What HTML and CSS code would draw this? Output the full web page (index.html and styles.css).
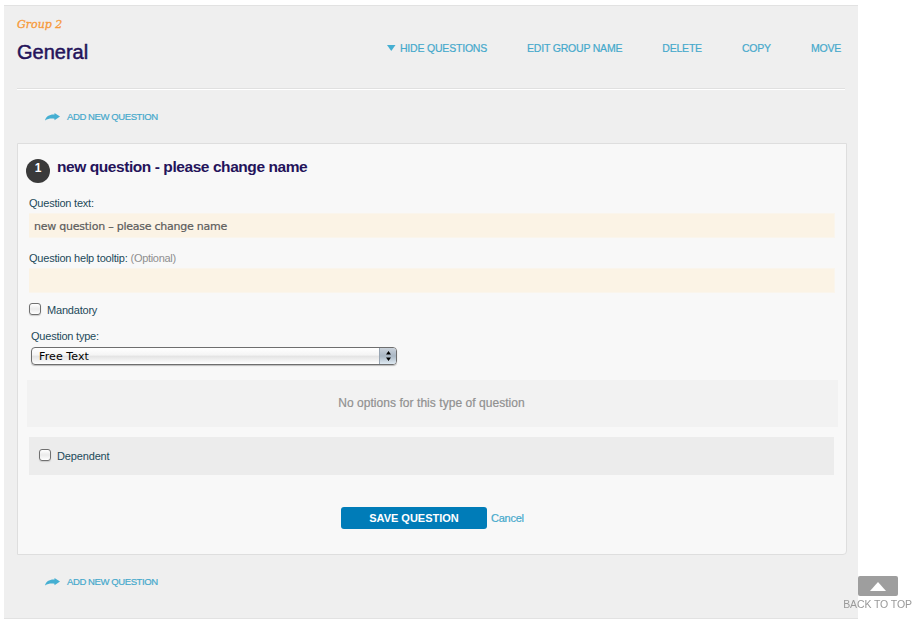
FILE: index.html
```html
<!DOCTYPE html>
<html lang="en">
<head>
<meta charset="utf-8">
<title>General</title>
<link rel="stylesheet" href="styles.css">
</head>
<body>
<main class="group">
  <header class="group-header">
    <div class="group-heading">
      <div class="group-index"><span>Group 2</span></div>
      <h1><span>General</span></h1>
    </div>
    <nav class="group-nav">
      <a class="nav-hide"><svg width="9" height="6" viewBox="0 0 9 6"><path d="M0 0h8.500L4.250 6z" fill="#45afd2"/></svg><span>HIDE QUESTIONS</span></a>
      <a class="nav-edit"><span>EDIT GROUP NAME</span></a>
      <a class="nav-delete"><span>DELETE</span></a>
      <a class="nav-copy"><span>COPY</span></a>
      <a class="nav-move"><span>MOVE</span></a>
    </nav>
  </header>
  <a class="add-question add-top"><svg width="16" height="8" viewBox="0 0 16 8"><path d="M0 7.500C.8 3.500 4.500 1.200 9.500 1.500V0l5.500 3.500L9.500 7.300V5.700C6 5.200 3 5.500 0 7.500z" fill="#45afd2"/></svg><span>ADD NEW QUESTION</span></a>
  <section class="card">
    <div class="title-row">
      <div class="badge">1</div>
      <h2><span>new question - please change name</span></h2>
    </div>
    <label class="label"><span class="t-question">Question text:</span></label>
    <div class="field"><span>new question – please change name</span></div>
    <label class="label label-help"><span class="t-help">Question help tooltip:</span><span class="optional">(Optional)</span></label>
    <div class="field"></div>
    <div class="check-row"><i class="checkbox"></i><span class="t-mandatory">Mandatory</span></div>
    <label class="label label-type"><span class="t-type">Question type:</span></label>
    <div class="select">
      <span>Free Text</span>
      <div class="stepper"><svg width="7" height="12" viewBox="0 0 7 12"><path d="M1 4.500h5L3.500 1zM1 7.500h5L3.500 11z" fill="#000"/></svg></div>
    </div>
    <div class="no-options"><span>No options for this type of question</span></div>
    <div class="dependent"><i class="checkbox"></i><span class="t-dependent">Dependent</span></div>
    <div class="actions"><div class="save"><span>SAVE QUESTION</span></div><a class="cancel">Cancel</a></div>
  </section>
  <a class="add-question add-bottom"><svg width="16" height="8" viewBox="0 0 16 8"><path d="M0 7.500C.8 3.500 4.500 1.200 9.500 1.500V0l5.500 3.500L9.500 7.300V5.700C6 5.200 3 5.500 0 7.500z" fill="#45afd2"/></svg><span>ADD NEW QUESTION</span></a>
</main>
<a class="back-top"><div class="back-button"><svg width="16" height="9" viewBox="0 0 16 9"><path d="M0 9h16L8 0z" fill="#fff"/></svg></div><span>BACK TO TOP</span></a>
</body>
</html>
```
FILE: styles.css
```css
* { box-sizing: border-box; }
body {
  margin: 0;
  height: 627px;
  overflow: hidden;
  background: #fff;
  font-family: "Liberation Sans", Arial, sans-serif;
  font-size: 11px;
  line-height: 14px;
  color: #1d4a5a;
  white-space: nowrap;
}
h1, h2 { margin: 0; color: #24135a; }
svg { display: block; flex: none; }
a { color: #45a9cc; }
.group {
  margin: 5px 0 0 4px;
  width: 854px;
  height: 614px;
  padding-left: 13px;
  background: #efefef;
  border-top: 1px solid #e2e2e2;
  border-bottom: 1px solid #e2e2e2;
  display: flow-root;
}
.group-header {
  display: flex;
  justify-content: space-between;
  width: 828px;
  height: 83px;
  border-bottom: 1px solid #e0e0e0;
  box-shadow: 0 1px 0 #fff;
}
.group-index {
  margin-top: 11px;
  height: 16px;
  font: italic 11px/16px "DejaVu Serif", Georgia, serif;
  color: #f79a3a;
  -webkit-text-stroke: 0.3px #f79a3a;
}
h1 {
  margin-top: 7px;
  font-size: 20px;
  line-height: 24px;
  font-weight: normal;
  -webkit-text-stroke: 0.5px #24135a;
  text-shadow: 0 1px 0 #fff;
}
.group-nav {
  display: flex;
  gap: 40px;
  padding: 35px 4px 0 0;
  height: 50px;
  font-size: 10.5px;
  letter-spacing: -0.2px;
}
.group-nav a, .add-question, .cancel { -webkit-text-stroke: 0.2px #45a9cc; }
.nav-hide { display: flex; gap: 4px; }
.nav-hide svg { margin-top: 4px; }
.add-question {
  display: flex;
  gap: 6px;
  height: 14px;
  padding-left: 28px;
  font-size: 9.5px;
  letter-spacing: -0.4px;
}
.add-question svg { margin-top: 3px; }
.add-top { margin-top: 21px; }
.add-bottom { margin-top: 20px; }
.card {
  display: flow-root;
  margin-top: 19px;
  width: 830px;
  height: 412px;
  background: #f8f8f8;
  border: 1px solid #dedede;
  border-bottom-right-radius: 4px;
}
.title-row { display: flex; padding: 14px 0 0 8px; height: 52px; }
.badge {
  width: 24px;
  height: 24px;
  margin-top: 1px;
  border-radius: 50%;
  background: #3a3a3a;
  color: #fff;
  font-weight: bold;
  font-size: 12px;
  line-height: 18px;
  text-align: center;
}
h2 {
  margin: -1px 0 0 7px;
  font-size: 15.5px;
  line-height: 20px;
  letter-spacing: -0.43px;
}
.label { display: flex; gap: 3px; height: 14px; margin-left: 11px; letter-spacing: -0.22px; }
.field {
  width: 806px;
  height: 25px;
  margin: 3px 0 0 11px;
  padding-left: 5px;
  background: #fbf3e5;
  border: 1px solid #faf5ec;
  border-width: 1px 1px 1px 0;
  color: #5c5c5c;
  font: 11px/25px "DejaVu Sans", sans-serif;
  letter-spacing: -0.24px;
  -webkit-text-stroke: 0.2px #5c5c5c;
}
.label-help { margin-top: 13px; }
.optional { color: #8f8f8f; letter-spacing: -0.3px; }
.checkbox {
  width: 12px;
  height: 12px;
  flex: none;
  border: 1px solid #707070;
  border-radius: 3px;
  background: linear-gradient(#fff, #eaeaea 50%, #fff);
  box-shadow: 0 1px 1px #ccc;
}
.check-row { display: flex; gap: 6px; height: 14px; margin: 10px 0 0 11px; letter-spacing: -0.2px; }
.label-type { margin: 12px 0 0 13px; }
.select {
  display: flex;
  justify-content: space-between;
  width: 366px;
  height: 18px;
  margin: 4px 0 0 13px;
  padding-left: 7px;
  border: 1px solid #6e6e6e;
  border-radius: 4px;
  background: linear-gradient(#fff, #f4f4f4 45%, #e3e3e3 50%, #fff);
  box-shadow: 0 1px 1px #bbb;
  font: 11px/17px "DejaVu Sans", sans-serif;
  letter-spacing: 0.1px;
  color: #000;
  overflow: hidden;
}
.stepper {
  width: 17px;
  display: flex;
  justify-content: center;
  align-items: center;
  border-left: 1px solid #98a5b2;
  background: linear-gradient(#cbd3dc, #a9b6c3 50%, #dfeaf3);
}
.no-options {
  width: 811px;
  height: 47px;
  margin: 15px 0 0 9px;
  padding-right: 2px;
  background: #f2f2f2;
  color: #909090;
  font-size: 12px;
  line-height: 46px;
  letter-spacing: 0.05px;
  text-align: center;
  -webkit-text-stroke: 0.2px #909090;
}
.dependent {
  display: flex;
  gap: 6px;
  width: 805px;
  height: 38px;
  margin: 10px 0 0 11px;
  padding: 12px 0 0 10px;
  background: #ececec;
  letter-spacing: -0.15px;
}
.actions { display: flex; gap: 4px; margin: 32px 0 0 323px; line-height: 22px; }
.cancel { letter-spacing: -0.25px; }
.save {
  width: 146px;
  height: 22px;
  border-radius: 3px;
  background: #007cb8;
  color: #fff;
  font-weight: bold;
  text-align: center;
}
.back-top {
  position: fixed;
  right: 0;
  bottom: 16px;
  width: 79px;
  display: flex;
  flex-direction: column;
  align-items: center;
  color: #999;
  font-size: 10.5px;
  letter-spacing: -0.1px;
}
.back-button {
  width: 40px;
  height: 20px;
  margin-bottom: 1px;
  border-radius: 2px;
  background: #9e9e9e;
  display: flex;
  align-items: center;
  justify-content: center;
}
```
